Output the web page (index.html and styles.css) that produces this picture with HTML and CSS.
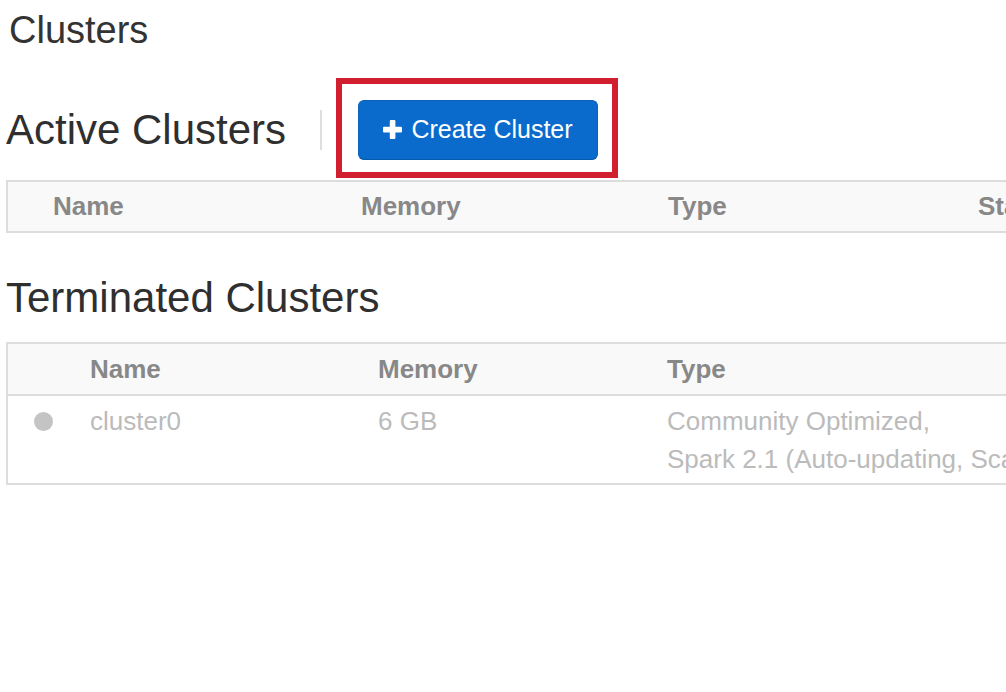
FILE: index.html
```html
<!DOCTYPE html>
<html>
<head>
<meta charset="utf-8">
<title>Clusters</title>
<link rel="stylesheet" href="styles.css">
</head>
<body>
<div class="page">
  <h1 class="page-title">Clusters</h1>

  <div class="section-head">
    <h2 class="section-title active-title">Active Clusters</h2>
    <div class="divider"></div>
    <div class="highlight">
      <button class="btn-create">
        <svg class="plus" width="19" height="19" viewBox="0 0 19 19" aria-hidden="true">
          <rect x="6.8" y="0" width="5.6" height="19" rx="1" fill="#fff"/>
          <rect x="0" y="6.8" width="19" height="5.6" rx="1" fill="#fff"/>
        </svg>
        <span>Create Cluster</span>
      </button>
    </div>
  </div>

  <div class="table table-active">
    <div class="thead">
      <div class="th">Name</div>
      <div class="th">Memory</div>
      <div class="th">Type</div>
      <div class="th">State</div>
    </div>
  </div>

  <h2 class="section-title terminated-title">Terminated Clusters</h2>

  <div class="table table-terminated">
    <div class="thead">
      <div class="th"></div>
      <div class="th">Name</div>
      <div class="th">Memory</div>
      <div class="th">Type</div>
    </div>
    <div class="trow">
      <div class="td"><span class="dot"></span></div>
      <div class="td">cluster0</div>
      <div class="td">6 GB</div>
      <div class="td type-cell">Community Optimized,<br>Spark 2.1 (Auto-updating, Scala 2.10)</div>
    </div>
  </div>
</div>
</body>
</html>
```

FILE: styles.css
```css
html, body {
  margin: 0;
  padding: 0;
  overflow: hidden;
  background: #fff;
}

body {
  font-family: "Liberation Sans", Arial, Helvetica, sans-serif;
  color: #333;
}

.page {
  padding: 8px 0 0 6px;
  width: 1400px;
}

.page-title {
  margin: 0 0 0 3px;
  font-size: 38px;
  line-height: 44px;
  font-weight: normal;
  color: #333;
}

.section-head {
  display: flex;
  align-items: flex-start;
  margin-top: 26px;
  height: 100px;
}

.section-title {
  margin: 31px 0 0 0;
  font-size: 42px;
  line-height: 42px;
  font-weight: normal;
  color: #2f2f2f;
  white-space: nowrap;
}

.active-title {
  width: 282px;
  flex: none;
}

.divider {
  flex: none;
  width: 2px;
  height: 40px;
  background: #dedede;
  margin: 32px 0 0 32px;
}

.highlight {
  flex: none;
  margin-left: 14px;
  border: 6px solid #d11f2f;
  padding: 16px 14px 12px 16px;
  height: 60px;
  width: 240px;
}

.btn-create {
  display: flex;
  align-items: center;
  justify-content: center;
  gap: 9px;
  width: 240px;
  height: 60px;
  box-sizing: border-box;
  margin: 0;
  padding: 0 0 1px 0;
  background: #0a6bcc;
  border: 1px solid #0a62bb;
  border-bottom-color: #0658a8;
  border-radius: 6px;
  color: #fff;
  font-family: "Liberation Sans", Arial, Helvetica, sans-serif;
  font-size: 25px;
}

.plus {
  display: block;
  flex: none;
}

.table {
  border: 2px solid #dddddd;
  width: 1380px;
}

.table-active {
  margin-top: 2px;
}

.thead {
  display: grid;
  background: #f9f9f9;
  font-size: 26px;
  font-weight: bold;
  color: #888;
  align-items: center;
}

.table-active .thead {
  grid-template-columns: 308px 307px 310px 308px;
  padding-left: 45px;
  height: 49px;
}

.terminated-title {
  margin-top: 44px;
}

.table-terminated {
  margin-top: 23px;
}

.table-terminated .thead,
.table-terminated .trow {
  grid-template-columns: 82px 288px 289px 500px;
}

.table-terminated .thead {
  height: 50px;
  border-bottom: 2px solid #dddddd;
}

.trow {
  display: grid;
  height: 87px;
  box-sizing: border-box;
  padding-top: 6px;
  font-size: 26px;
  line-height: 38px;
  color: #bbbbbb;
}

.td {
  white-space: nowrap;
}

.dot {
  display: block;
  width: 19px;
  height: 19px;
  border-radius: 50%;
  background: #c4c4c4;
  margin: 10px 0 0 26px;
}
```
